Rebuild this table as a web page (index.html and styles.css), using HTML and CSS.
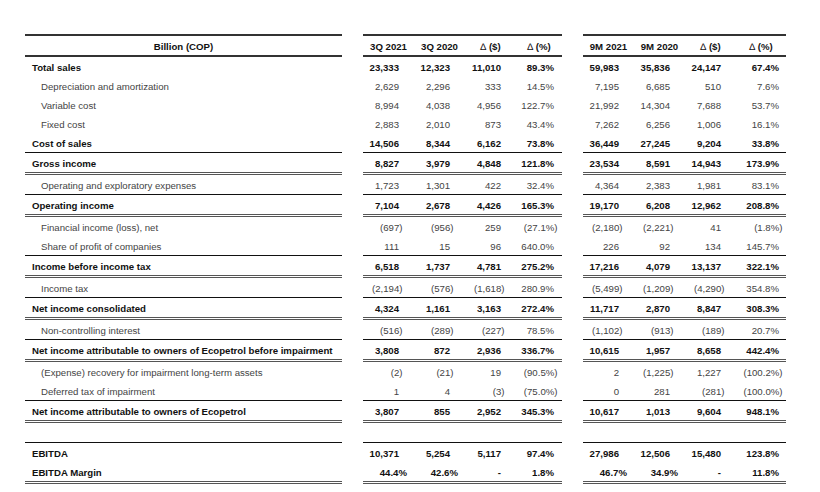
FILE: index.html
```html
<!DOCTYPE html>
<html lang="en">
<head>
<meta charset="utf-8">
<title>Income statement</title>
<link rel="stylesheet" href="styles.css">
</head>
<body>
<table class="fin">
  <colgroup>
    <col class="w-lbl"><col class="w-sp">
    <col class="w-n"><col class="w-n"><col class="w-n"><col class="w-pq">
    <col class="w-sp">
    <col class="w-n"><col class="w-n"><col class="w-n"><col class="w-pm">
  </colgroup>
  <thead>
    <tr>
      <th class="lbl-h">Billion (COP)</th><th class="sp"></th>
      <th>3Q 2021</th><th>3Q 2020</th><th><span class="dl">&#8710;</span> ($)</th><th><span class="dl">&#8710;</span> (%)</th>
      <th class="sp"></th>
      <th>9M 2021</th><th>9M 2020</th><th><span class="dl">&#8710;</span> ($)</th><th><span class="dl">&#8710;</span> (%)</th>
    </tr>
  </thead>
  <tbody>
    <tr class="b"><td class="lbl">Total sales</td><td class="sp"></td><td>23,333</td><td>12,323</td><td>11,010</td><td>89.3%</td><td class="sp"></td><td>59,983</td><td>35,836</td><td>24,147</td><td>67.4%</td></tr>
    <tr><td class="lbl">Depreciation and amortization</td><td class="sp"></td><td>2,629</td><td>2,296</td><td>333</td><td>14.5%</td><td class="sp"></td><td>7,195</td><td>6,685</td><td>510</td><td>7.6%</td></tr>
    <tr><td class="lbl">Variable cost</td><td class="sp"></td><td>8,994</td><td>4,038</td><td>4,956</td><td>122.7%</td><td class="sp"></td><td>21,992</td><td>14,304</td><td>7,688</td><td>53.7%</td></tr>
    <tr><td class="lbl">Fixed cost</td><td class="sp"></td><td>2,883</td><td>2,010</td><td>873</td><td>43.4%</td><td class="sp"></td><td>7,262</td><td>6,256</td><td>1,006</td><td>16.1%</td></tr>
    <tr class="b s"><td class="lbl">Cost of sales</td><td class="sp"></td><td>14,506</td><td>8,344</td><td>6,162</td><td>73.8%</td><td class="sp"></td><td>36,449</td><td>27,245</td><td>9,204</td><td>33.8%</td></tr>
    <tr class="b d"><td class="lbl">Gross income</td><td class="sp"></td><td>8,827</td><td>3,979</td><td>4,848</td><td>121.8%</td><td class="sp"></td><td>23,534</td><td>8,591</td><td>14,943</td><td>173.9%</td></tr>
    <tr class="s"><td class="lbl">Operating and exploratory expenses</td><td class="sp"></td><td>1,723</td><td>1,301</td><td>422</td><td>32.4%</td><td class="sp"></td><td>4,364</td><td>2,383</td><td>1,981</td><td>83.1%</td></tr>
    <tr class="b d"><td class="lbl">Operating income</td><td class="sp"></td><td>7,104</td><td>2,678</td><td>4,426</td><td>165.3%</td><td class="sp"></td><td>19,170</td><td>6,208</td><td>12,962</td><td>208.8%</td></tr>
    <tr><td class="lbl">Financial income (loss), net</td><td class="sp"></td><td><span class="ng">(697)</span></td><td><span class="ng">(956)</span></td><td>259</td><td><span class="ng">(27.1%)</span></td><td class="sp"></td><td><span class="ng">(2,180)</span></td><td><span class="ng">(2,221)</span></td><td>41</td><td><span class="ng">(1.8%)</span></td></tr>
    <tr class="s"><td class="lbl">Share of profit of companies</td><td class="sp"></td><td>111</td><td>15</td><td>96</td><td>640.0%</td><td class="sp"></td><td>226</td><td>92</td><td>134</td><td>145.7%</td></tr>
    <tr class="b d"><td class="lbl">Income before income tax</td><td class="sp"></td><td>6,518</td><td>1,737</td><td>4,781</td><td>275.2%</td><td class="sp"></td><td>17,216</td><td>4,079</td><td>13,137</td><td>322.1%</td></tr>
    <tr class="s"><td class="lbl">Income tax</td><td class="sp"></td><td><span class="ng">(2,194)</span></td><td><span class="ng">(576)</span></td><td><span class="ng">(1,618)</span></td><td>280.9%</td><td class="sp"></td><td><span class="ng">(5,499)</span></td><td><span class="ng">(1,209)</span></td><td><span class="ng">(4,290)</span></td><td>354.8%</td></tr>
    <tr class="b d"><td class="lbl">Net income consolidated</td><td class="sp"></td><td>4,324</td><td>1,161</td><td>3,163</td><td>272.4%</td><td class="sp"></td><td>11,717</td><td>2,870</td><td>8,847</td><td>308.3%</td></tr>
    <tr class="s"><td class="lbl">Non-controlling interest</td><td class="sp"></td><td><span class="ng">(516)</span></td><td><span class="ng">(289)</span></td><td><span class="ng">(227)</span></td><td>78.5%</td><td class="sp"></td><td><span class="ng">(1,102)</span></td><td><span class="ng">(913)</span></td><td><span class="ng">(189)</span></td><td>20.7%</td></tr>
    <tr class="b d"><td class="lbl">Net income attributable to owners of Ecopetrol before impairment</td><td class="sp"></td><td>3,808</td><td>872</td><td>2,936</td><td>336.7%</td><td class="sp"></td><td>10,615</td><td>1,957</td><td>8,658</td><td>442.4%</td></tr>
    <tr><td class="lbl">(Expense) recovery for impairment long-term assets</td><td class="sp"></td><td><span class="ng">(2)</span></td><td><span class="ng">(21)</span></td><td>19</td><td><span class="ng">(90.5%)</span></td><td class="sp"></td><td>2</td><td><span class="ng">(1,225)</span></td><td>1,227</td><td><span class="ng">(100.2%)</span></td></tr>
    <tr class="s"><td class="lbl">Deferred tax of impairment</td><td class="sp"></td><td>1</td><td>4</td><td><span class="ng">(3)</span></td><td><span class="ng">(75.0%)</span></td><td class="sp"></td><td>0</td><td>281</td><td><span class="ng">(281)</span></td><td><span class="ng">(100.0%)</span></td></tr>
    <tr class="b d"><td class="lbl">Net income attributable to owners of Ecopetrol</td><td class="sp"></td><td>3,807</td><td>855</td><td>2,952</td><td>345.3%</td><td class="sp"></td><td>10,617</td><td>1,013</td><td>9,604</td><td>948.1%</td></tr>
    <tr class="s"><td class="lbl">&nbsp;</td><td class="sp"></td><td></td><td></td><td></td><td></td><td class="sp"></td><td></td><td></td><td></td><td></td></tr>
    <tr class="b"><td class="lbl">EBITDA</td><td class="sp"></td><td>10,371</td><td>5,254</td><td>5,117</td><td>97.4%</td><td class="sp"></td><td>27,986</td><td>12,506</td><td>15,480</td><td>123.8%</td></tr>
    <tr class="b d"><td class="lbl">EBITDA Margin</td><td class="sp"></td><td><span class="pm">44.4%</span></td><td><span class="pm">42.6%</span></td><td>-</td><td>1.8%</td><td class="sp"></td><td><span class="pm">46.7%</span></td><td><span class="pm">34.9%</span></td><td>-</td><td>11.8%</td></tr>
  </tbody>
</table>
</body>
</html>
```

FILE: styles.css
```css
html, body {
  margin: 0;
  padding: 0;
  background: #ffffff;
}

body {
  font-family: "Liberation Sans", Arial, sans-serif;
  font-size: 9.65px;
  color: #444444;
}

.fin {
  margin: 34px 0 0 25px;
  border-collapse: separate;
  border-spacing: 0;
  table-layout: fixed;
  width: 761px;
}

.w-lbl { width: 317px; }
.w-sp { width: 21px; }
.w-n { width: 51px; }
.w-pq { width: 46px; }
.w-pm { width: 50px; }

.fin th {
  font-weight: bold;
  color: #111111;
  text-align: center;
  padding: 2px 0 0;
  line-height: 17px;
  border-top: 2px solid #333333;
  border-bottom: 2px solid #333333;
  white-space: nowrap;
}

.fin th.sp {
  border: none;
}

.dl {
  font-weight: normal;
}

.fin td {
  padding: 2px 15px 0 0;
  line-height: 17px;
  text-align: right;
  white-space: nowrap;
}

.fin td:nth-child(6) { padding-right: 8px; }
.fin td:nth-child(11) { padding-right: 7px; }

.fin td.sp { padding: 0; }

.fin td.lbl {
  text-align: left;
  padding-left: 16px;
  padding-right: 0;
}

.fin tr.b td {
  font-weight: bold;
  color: #111111;
}

.fin tr.b td.lbl {
  padding-left: 7px;
}

.fin tr.s td:not(.sp) {
  border-bottom: 1px solid #111111;
}

.fin tr.d td:not(.sp) {
  border-bottom: 3px double #555555;
}

.ng {
  margin-right: -3.5px;
}

.pm {
  margin-right: -8px;
}
```
